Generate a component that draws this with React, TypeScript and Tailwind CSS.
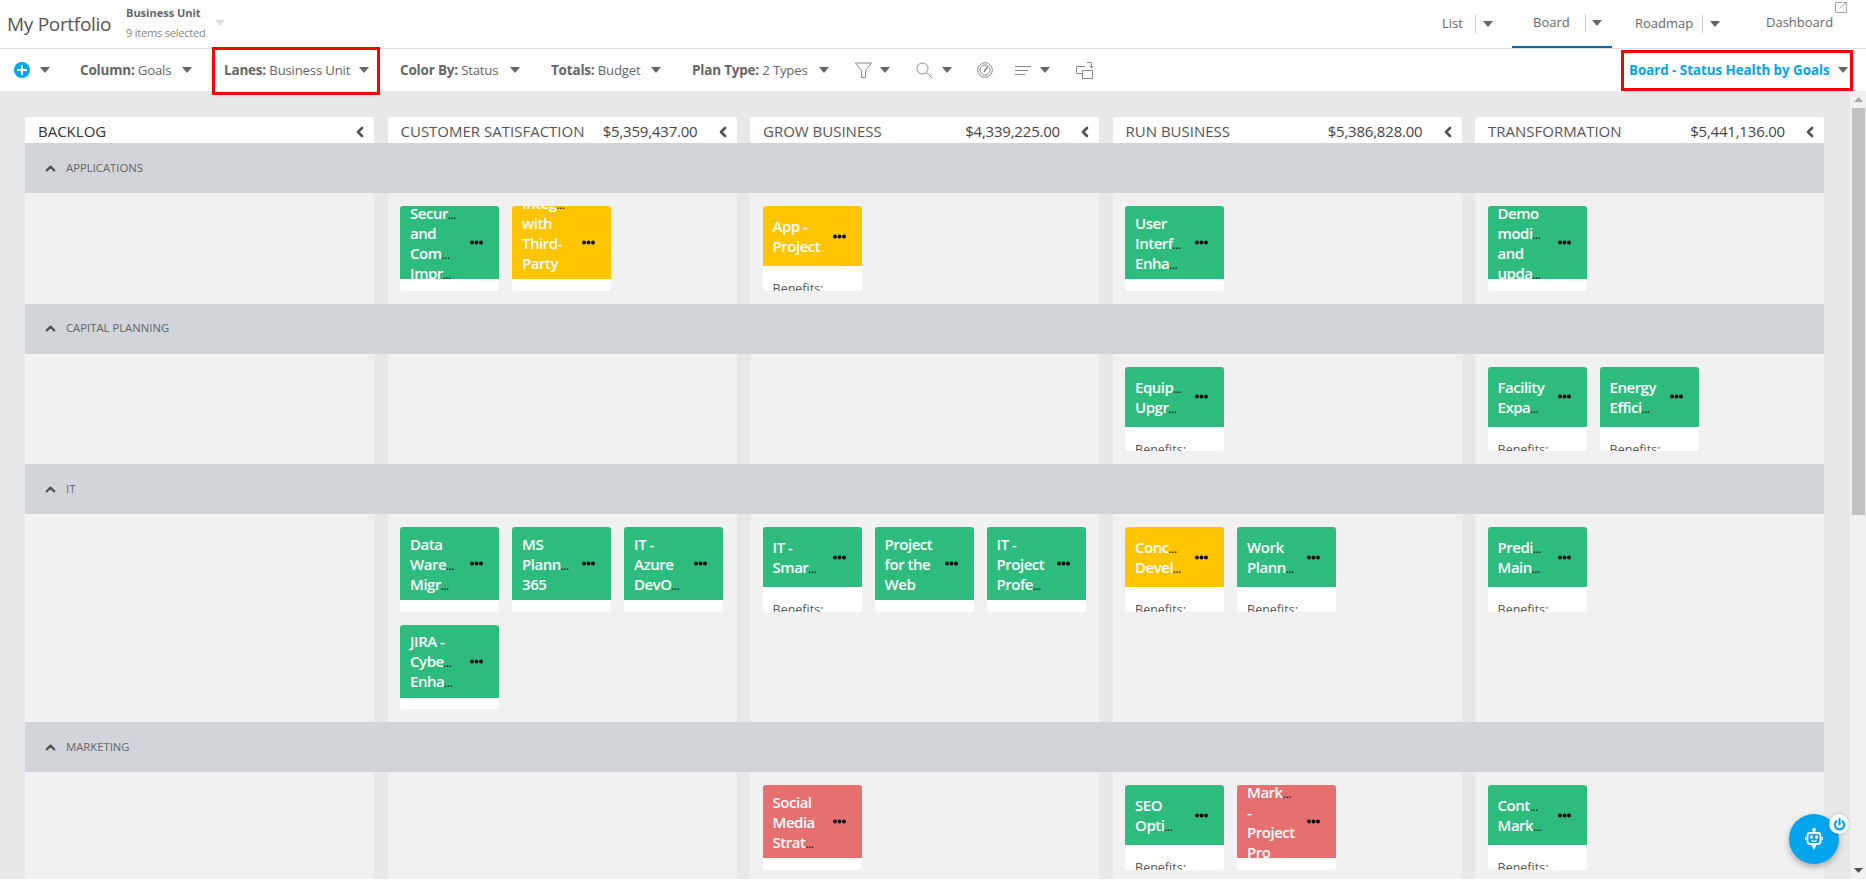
import React from "react";
import { ChevronLeft, ChevronUp } from "lucide-react";

const Caret = ({ className = "text-[#666]" }: { className?: string }) => (
  <svg width="10" height="6" viewBox="0 0 10 6" className={`shrink-0 ${className}`}>
    <polygon points="0,0 10,0 5,6" fill="currentColor" />
  </svg>
);

const Item = ({ label, value, className = "" }: { label: string; value: string; className?: string }) => (
  <div className={`flex items-center justify-between h-[20px] shrink-0 ${className}`}>
    <span className="whitespace-nowrap text-[13.5px] leading-[20px] text-[#666] tracking-[-0.2px]">
      <b className="font-bold">{label}:</b> <span className="text-[13.2px]">{value}</span>
    </span>
    <Caret />
  </div>
);

type Card = { c: "g" | "y" | "r"; lines: string[] };
const g = (...lines: string[]): Card => ({ c: "g", lines });
const y = (...lines: string[]): Card => ({ c: "y", lines });
const r = (...lines: string[]): Card => ({ c: "r", lines });

const lanes: { name: string; cols: Card[][] }[] = [
  {
    name: "APPLICATIONS",
    cols: [[], [g("Secur~", "and", "Com~", "Impr~"), y("Integ~", "with", "Third-", "Party", "Syst~")], [y("App -", "Project")], [g("User", "Interf~", "Enha~")], [g("Demo", "modi~", "and", "upda~")]],
  },
  {
    name: "CAPITAL PLANNING",
    cols: [[], [], [], [g("Equip~", "Upgr~")], [g("Facility", "Expa~"), g("Energy", "Effici~")]],
  },
  {
    name: "IT",
    cols: [[], [g("Data", "Ware~", "Migr~"), g("MS", "Plann~", "365"), g("IT -", "Azure", "DevO~"), g("JIRA -", "Cybe~", "Enha~")], [g("IT -", "Smar~"), g("Project", "for the", "Web"), g("IT -", "Project", "Profe~")], [y("Conc~", "Devel~"), g("Work", "Plann~")], [g("Predi~", "Main~")]],
  },
  {
    name: "MARKETING",
    cols: [[], [], [r("Social", "Media", "Strat~")], [g("SEO", "Opti~"), r("Mark~", "-", "Project", "Pro")], [g("Cont~", "Mark~")]],
  },
];

const headers = [
  { t: "BACKLOG", a: "" },
  { t: "CUSTOMER SATISFACTION", a: "$5,359,437.00" },
  { t: "GROW BUSINESS", a: "$4,339,225.00" },
  { t: "RUN BUSINESS", a: "$5,386,828.00" },
  { t: "TRANSFORMATION", a: "$5,441,136.00" },
];

const Dots = () => (
  <svg width="13" height="5" viewBox="0 0 13 5" className="shrink-0">
    <circle cx="2" cy="2.5" r="1.9" fill="#000" />
    <circle cx="6.5" cy="2.5" r="1.9" fill="#000" />
    <circle cx="11" cy="2.5" r="1.9" fill="#000" />
  </svg>
);

const bg = { g: "bg-[#2dbc7e]", y: "bg-[#ffc500]", r: "bg-[#e67070]" };

const CardView = ({ card }: { card: Card }) => {
  const short = card.lines.length < 3;
  return (
    <div className="w-[99px] h-[84.5px] bg-white rounded-[3px] overflow-hidden shrink-0">
      <div className={`${bg[card.c]} ${short ? "h-[60px]" : "h-[73px]"} flex items-center overflow-hidden pl-[10px] pr-[16px]`}>
        <div className="w-[60px] shrink-0 text-white text-[15px] tracking-[-0.5px] leading-[20px] font-semibold">
          {card.lines.map((l, i) => (
            <div key={i} className="whitespace-nowrap h-[20px]">
              {l.replace("~", "")}
              {l.endsWith("~") && <span className="text-[10px] tracking-[0px] leading-none font-semibold text-[#111]">...</span>}
            </div>
          ))}
        </div>
        <div className="ml-auto flex items-center"><Dots /></div>
      </div>
      {short && <div className="pl-[10px] pt-[14px] text-[12.5px] leading-[18px] text-[#555]">Benefits:</div>}
    </div>
  );
};

export default function App() {
  return (
    <div className="relative w-[1866px] h-[892px] bg-white overflow-hidden font-['Open_Sans','Noto_Sans',sans-serif]">
      {/* Top header */}
      <header className="h-[49px] border-b border-[#e0e0e6] flex items-center pl-[7px]">
        <span className="w-[105px] text-[19px] tracking-[-0.3px] text-[#555] leading-none whitespace-nowrap">My Portfolio</span>
        <div className="ml-[14px] w-[80px] flex flex-col">
          <span className="text-[11px] font-bold text-[#666] leading-[16px] mt-[-3px] whitespace-nowrap">Business Unit</span>
          <span className="text-[11px] tracking-[-0.2px] text-[#888] leading-[16px] mt-[4px] whitespace-nowrap">9 items selected</span>
        </div>
        <span className="ml-[9px] mt-[-2px]"><Caret className="text-[#dcdcdc]" /></span>

        <nav className="ml-auto flex items-center h-full text-[13px] text-[#666] relative">
          <div className="flex items-center h-full">
            <span className="w-[33px]">List</span>
            <span className="w-px h-[18px] bg-[#ccc]" />
            <span className="ml-[7px]"><Caret /></span>
          </div>
          <div className="ml-[19px] w-[100px] h-full flex items-center border-b-2 border-[#0a69a4] pl-[21px]">
            <span className="w-[52px]">Board</span>
            <span className="w-px h-[18px] bg-[#ccc]" />
            <span className="ml-[6px]"><Caret /></span>
          </div>
          <div className="ml-[23px] flex items-center h-full">
            <span className="w-[67px]">Roadmap</span>
            <span className="w-px h-[18px] bg-[#ccc]" />
            <span className="ml-[7px]"><Caret /></span>
          </div>
          <span className="ml-[46px] mr-[34px] w-[66px] whitespace-nowrap mt-[-2px]">Dashboard</span>
        </nav>
        <svg width="12" height="11" viewBox="0 0 13 12" className="absolute right-[19px] top-[2px] text-[#999]" fill="none" stroke="currentColor">
          <path d="M7.5 .5H.5V11.5H12.5V5M5 7L12 1M8.5 .5H12.5V4.5" />
        </svg>
      </header>

      {/* Toolbar */}
      <div className="h-[42px] flex items-center pl-[14px] relative">
        <span className="w-4 h-4 rounded-full bg-[#03a4ee] relative shrink-0">
          <span className="absolute left-[3px] right-[3px] top-[7px] h-[2px] bg-white" />
          <span className="absolute top-[3px] bottom-[3px] left-[7px] w-[2px] bg-white" />
        </span>
        <span className="ml-[10px]"><Caret /></span>
        <Item label="Column" value="Goals" className="ml-[30px] w-[112px]" />
        <div className="relative ml-[32px] h-[20px]">
          <Item label="Lanes" value="Business Unit" className="w-[145px]" />
          <span className="absolute left-[-12px] right-[-11px] top-[-13px] bottom-[-15px] border-[3px] border-[#f00]" />
        </div>
        <Item label="Color By" value="Status" className="ml-[31px] w-[120px]" />
        <Item label="Totals" value="Budget" className="ml-[31px] w-[110px]" />
        <Item label="Plan Type" value="2 Types" className="ml-[31px] w-[137px]" />
        <svg width="17" height="17" viewBox="0 0 17 17" fill="none" stroke="#888" className="ml-[26px]">
          <path d="M.5 1H16.5L10.5 8.5V15.5H6.5V8.5Z" />
        </svg>
        <span className="ml-[8px]"><Caret /></span>
        <svg width="17" height="17" viewBox="0 0 17 17" fill="none" stroke="#888" className="ml-[26px]">
          <circle cx="6.5" cy="6.5" r="5.5" /><path d="M10.5 10.5L16.5 16.5" />
        </svg>
        <span className="ml-[9px]"><Caret /></span>
        <svg width="16" height="16" viewBox="0 0 16 16" fill="none" stroke="#888" className="ml-[25px]">
          <circle cx="8" cy="8" r="7.3" /><circle cx="8" cy="8" r="5" /><path d="M7 10L10.5 4.5" strokeWidth="1.5" />
        </svg>
        <svg width="16" height="9" viewBox="0 0 16 9" fill="none" stroke="#888" className="ml-[22px]">
          <path d="M0 .5H16M0 4.5H13M0 8.5H10" />
        </svg>
        <span className="ml-[9px]"><Caret /></span>
        <svg width="17" height="17" viewBox="0 0 17 17" fill="none" stroke="#888" className="ml-[26px]">
          <path d="M9 4.5H.5V11.5H6M6.5 8.5H16.5V16.5H6.5ZM11 .5H15.5V6M13.5 3.5L15.5 6L16.8 4" />
        </svg>

        <div className="ml-auto mr-[18px] h-[20px] flex items-center relative">
          <span className="w-[209px] text-[13.3px] leading-[20px] font-bold text-[#03a4ee] whitespace-nowrap">Board - Status Health by Goals</span>
          <Caret />
          <span className="absolute left-[-8px] right-[-5px] top-[-10px] bottom-[-11px] border-[3px] border-[#f00]" />
        </div>
      </div>

      {/* Board */}
      <div className="h-[788px] flex bg-[#e8e8e8]">
        <main className="flex-1 overflow-hidden pt-[26px] pl-[25px] pr-[26px]">
          <div className="grid grid-cols-5 gap-x-[13.5px]">
            {headers.map((h, i) => (
              <div key={h.t} className="h-[26px] bg-white rounded-t-[3px] flex items-center pt-[3px] pl-[13px] pr-[6px] text-[15px] text-[#555]">
                <span className={`whitespace-nowrap ${i === 0 ? "text-[#333]" : ""}`}>{h.t}</span>
                <span className="ml-auto whitespace-nowrap text-[#444] tracking-[-0.2px]">{h.a}</span>
                <ChevronLeft size={16} strokeWidth={4} className="ml-[17px] text-[#555] shrink-0" />
              </div>
            ))}
          </div>
          {lanes.map((lane) => (
            <section key={lane.name}>
              <div className="h-[50px] bg-[#d1d5d9] flex items-center pl-[18px]">
                <ChevronUp size={15} strokeWidth={3.5} className="text-[#555]" />
                <span className="ml-[8px] text-[11.3px] text-[#666]">{lane.name}</span>
              </div>
              <div className="grid grid-cols-5 gap-x-[13.5px]">
                {lane.cols.map((col, i) => (
                  <div key={i} className="bg-[#f1f1f1] pl-[12.6px] pr-[12px] py-[13px] flex flex-wrap content-start gap-[13px] min-h-[110.5px]">
                    {col.map((c, j) => <CardView key={j} card={c} />)}
                  </div>
                ))}
              </div>
            </section>
          ))}
        </main>
        <aside className="w-[16px] bg-[#f1f1f1] flex flex-col items-center">
          <svg width="9" height="5" viewBox="0 0 9 5" className="mt-[6px] text-[#aaa]"><polygon points="4.5,0 9,5 0,5" fill="currentColor" /></svg>
          <div className="mt-[6px] w-[13px] h-[407px] bg-[#c1c1c1]" />
          <svg width="9" height="5" viewBox="0 0 9 5" className="mt-auto mb-[6px] text-[#505050]"><polygon points="0,0 9,0 4.5,5" fill="currentColor" /></svg>
        </aside>
      </div>

      {/* Chat button */}
      <button className="absolute left-[1789px] top-[814px] w-[50px] h-[50px] rounded-full bg-[#03a4ee] shadow-[0_3px_6px_rgba(0,0,0,0.3)] flex items-center justify-center">
        <svg width="18" height="22" viewBox="0 0 18 22" fill="none" stroke="#fff" strokeWidth="1.8">
          <rect x="2.5" y="5" width="13" height="11" rx="2.5" />
          <path d="M9 5V2" /><circle cx="9" cy="1.8" r="1" fill="#fff" />
          <path d="M.5 9V12M17.5 9V12" />
          <path d="M6.5 12.5C8 13.5 10 13.5 11.5 12.5" strokeWidth="1.2" />
          <circle cx="6.5" cy="9" r=".8" fill="#fff" /><circle cx="11.5" cy="9" r=".8" fill="#fff" />
          <path d="M7 16L9 20L11 16" />
        </svg>
      </button>
      <span className="absolute left-[1829px] top-[814px] w-5 h-5 rounded-full bg-white flex items-center justify-center shadow-[0_0_3px_rgba(0,0,0,0.25)]">
        <svg width="13" height="13" viewBox="0 0 12 12" fill="none" stroke="#03a4ee" strokeWidth="2" strokeLinecap="round">
          <path d="M6 1V6M3.2 3A4.3 4.3 0 1 0 8.8 3" />
        </svg>
      </span>
    </div>
  );
}
